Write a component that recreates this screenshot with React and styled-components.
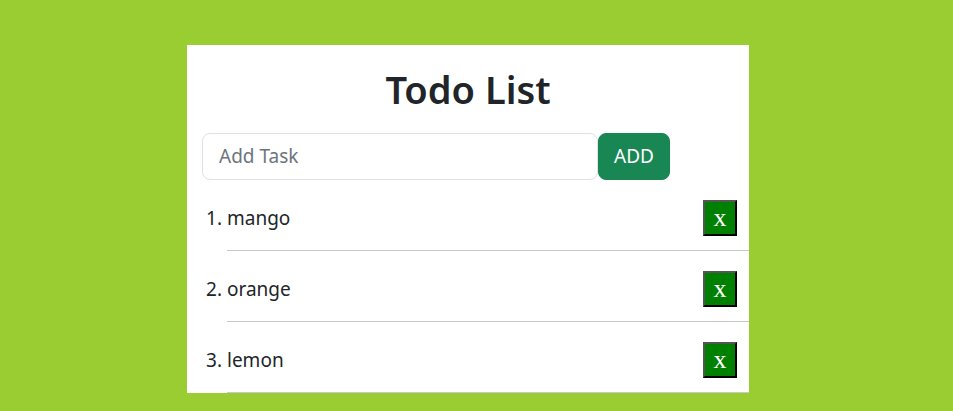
import React, { useState } from 'react';
import styled, { createGlobalStyle } from 'styled-components';

const GlobalStyle = createGlobalStyle`
  html, body {
    margin: 0;
    padding: 0;
    background-color: #9acd32;
    font-family: "Noto Sans", "Liberation Sans", sans-serif;
    color: #212529;
  }
  * {
    box-sizing: border-box;
  }
`;

const Page = styled.div`
  display: flex;
  padding: 45px 0 0 187px;
`;

const Card = styled.div`
  width: 562px;
  background-color: #fff;
  display: flex;
  flex-direction: column;
`;

const Title = styled.h1`
  margin: 22px 0 20px;
  font-size: 38px;
  font-weight: 600;
  line-height: 1.2;
  text-align: center;
`;

const InputRow = styled.div`
  display: flex;
  width: 468px;
  margin-left: 15px;
`;

const TaskInput = styled.input`
  flex: 1;
  height: 47px;
  padding: 8px 16px;
  font-family: inherit;
  font-size: 19px;
  color: #212529;
  border: 1px solid #dee2e6;
  border-radius: 8px;
  outline: none;

  &::placeholder {
    color: #6c757d;
  }
`;

const AddButton = styled.button`
  height: 47px;
  padding: 8px 15px;
  font-family: inherit;
  font-size: 19px;
  color: #fff;
  background-color: #198754;
  border: 1px solid #198754;
  border-radius: 8px;
  cursor: pointer;
`;

const List = styled.ol`
  margin: 0;
  padding: 0 0 0 40px;
  font-size: 19px;
`;

const Item = styled.li`
  padding-top: 20px;
`;

const Row = styled.div`
  display: flex;
  align-items: center;
  justify-content: space-between;
`;

const RemoveButton = styled.button`
  width: 34px;
  height: 36px;
  margin-right: 12px;
  padding: 0;
  font-family: "Liberation Serif", serif;
  font-size: 26px;
  font-weight: 400;
  line-height: 1;
  color: #fff;
  background-color: #008000;
  border: 2px solid;
  border-color: #555 #000 #000 #555;
  cursor: pointer;
`;

const Divider = styled.hr`
  margin: 14px 0 0;
  border: 0;
  border-top: 1px solid #c8c9ca;
`;

export default function App() {
  const [tasks, setTasks] = useState(['mango', 'orange', 'lemon']);
  const [text, setText] = useState('');

  const addTask = () => {
    if (!text.trim()) return;
    setTasks([...tasks, text.trim()]);
    setText('');
  };

  return (
    <>
      <GlobalStyle />
      <Page>
        <Card>
          <Title>Todo List</Title>
          <InputRow>
            <TaskInput
              placeholder="Add Task"
              value={text}
              onChange={(e) => setText(e.target.value)}
            />
            <AddButton onClick={addTask}>ADD</AddButton>
          </InputRow>
          <List>
            {tasks.map((task, i) => (
              <Item key={i}>
                <Row>
                  <span>{task}</span>
                  <RemoveButton onClick={() => setTasks(tasks.filter((_, j) => j !== i))}>
                    x
                  </RemoveButton>
                </Row>
                <Divider />
              </Item>
            ))}
          </List>
        </Card>
      </Page>
    </>
  );
}
